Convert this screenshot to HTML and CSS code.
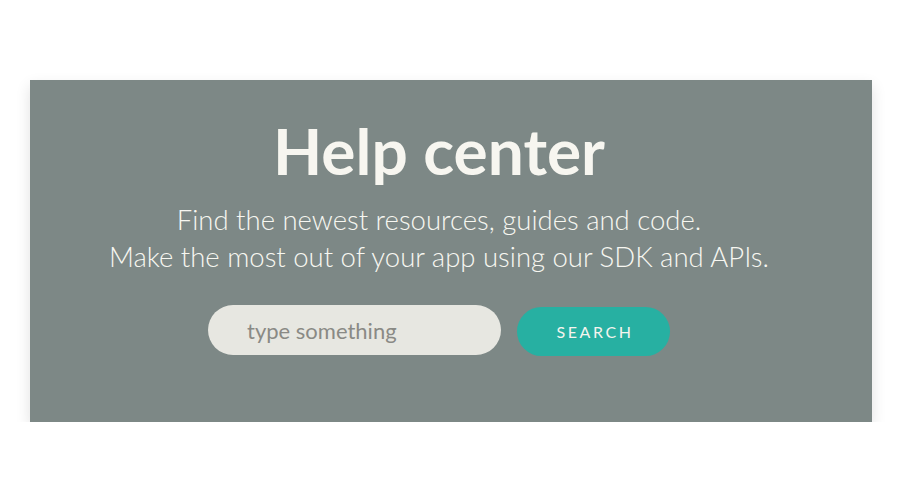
FILE: index.html
```html
<!DOCTYPE html>
<html lang="en">
<head>
<meta charset="utf-8">
<title>Help center</title>
<link rel="stylesheet" href="styles.css">
</head>
<body>
<section class="hero">
  <h1 class="hero-title">Help center</h1>
  <p class="hero-text">Find the newest resources, guides and code.<br>Make the most out of your app using our SDK and APIs.</p>
  <form class="search">
    <input class="search-input" type="text" placeholder="type something">
    <button class="search-button" type="button">SEARCH</button>
  </form>
</section>
</body>
</html>
```
FILE: styles.css
```css
html, body {
  margin: 0;
  padding: 0;
  background: #ffffff;
}
body {
  padding: 80px 28px 0 30px;
  font-family: Lato, "Open Sans", sans-serif;
}
.hero {
  background: #7d8886;
  height: 342px;
  box-sizing: border-box;
  padding: 35px 24px 0 0;
  display: flex;
  flex-direction: column;
  align-items: center;
  box-shadow: 0 6px 14px rgba(0, 0, 0, 0.12);
}
.hero-title {
  margin: 0;
  color: #f7f6f0;
  font-size: 64px;
  font-weight: 700;
  line-height: 72px;
}
.hero-text {
  margin: 14px 0 0;
  color: #f7f7f1;
  font-size: 27.5px;
  font-weight: 300;
  line-height: 37px;
  text-align: center;
}
.search {
  margin: 30px 0 0;
  display: flex;
  align-items: flex-start;
  gap: 16px;
}
.search-input {
  width: 293px;
  height: 50px;
  box-sizing: border-box;
  border: 0;
  border-radius: 25px;
  background: #e7e7e1;
  padding: 0 0 0 39px;
  font-family: Lato, sans-serif;
  font-size: 22px;
  font-weight: 400;
  color: #555;
  outline: none;
}
.search-input::placeholder {
  color: #8a8a85;
}
.search-button {
  width: 153px;
  height: 49px;
  margin-top: 2px;
  border: 0;
  border-radius: 25px;
  background: #27b0a2;
  color: #f4f4ee;
  font-family: Lato, sans-serif;
  font-size: 16px;
  font-weight: 400;
  letter-spacing: 2.6px;
  padding: 0 0 0 3px;
}
```
